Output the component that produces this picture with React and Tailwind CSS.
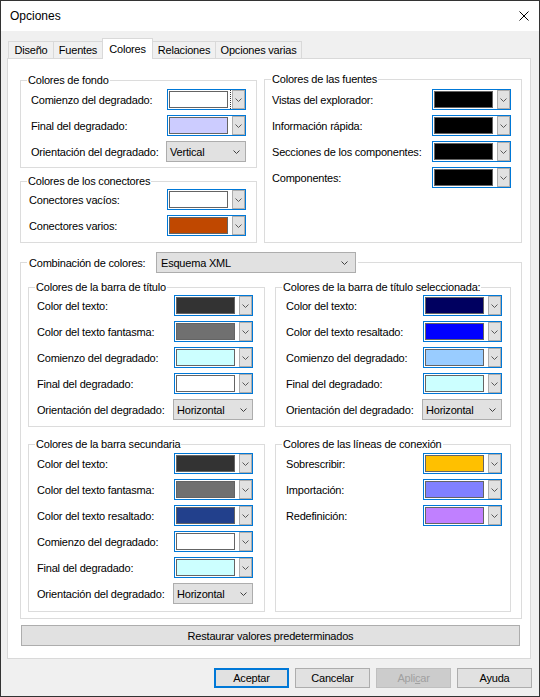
import clsx from 'clsx'

const FONDO = [
  { label: 'Comienzo del degradado:', color: 'bg-white', focused: true },
  { label: 'Final del degradado:', color: 'bg-[#ccccff]' },
]

const CONECTORES = [
  { label: 'Conectores vacíos:', color: 'bg-white' },
  { label: 'Conectores varios:', color: 'bg-[#c04800]' },
]

const FUENTES = [
  { label: 'Vistas del explorador:', color: 'bg-black' },
  { label: 'Información rápida:', color: 'bg-black' },
  { label: 'Secciones de los componentes:', color: 'bg-black' },
  { label: 'Componentes:', color: 'bg-black' },
]

const TITULO = [
  { label: 'Color del texto:', color: 'bg-[#333333]' },
  { label: 'Color del texto fantasma:', color: 'bg-[#707070]' },
  { label: 'Comienzo del degradado:', color: 'bg-[#ccffff]' },
  { label: 'Final del degradado:', color: 'bg-white' },
]

const SELECCIONADA = [
  { label: 'Color del texto:', color: 'bg-[#000060]' },
  { label: 'Color del texto resaltado:', color: 'bg-[#0000ff]' },
  { label: 'Comienzo del degradado:', color: 'bg-[#99ccff]' },
  { label: 'Final del degradado:', color: 'bg-[#ccffff]' },
]

const SECUNDARIA = [
  { label: 'Color del texto:', color: 'bg-[#333333]' },
  { label: 'Color del texto fantasma:', color: 'bg-[#707070]' },
  { label: 'Color del texto resaltado:', color: 'bg-[#22408c]' },
  { label: 'Comienzo del degradado:', color: 'bg-white' },
  { label: 'Final del degradado:', color: 'bg-[#ccffff]' },
]

const LINEAS = [
  { label: 'Sobrescribir:', color: 'bg-[#ffc000]' },
  { label: 'Importación:', color: 'bg-[#8080ff]' },
  { label: 'Redefinición:', color: 'bg-[#c080ff]' },
]

const TABS = [
  { label: 'Diseño', w: 'w-[45px]' },
  { label: 'Fuentes', w: 'w-[49px]' },
  { label: 'Colores', w: 'w-[51px]', active: true },
  { label: 'Relaciones', w: 'w-[62px]', noLeft: true },
  { label: 'Opciones varias', w: 'w-[87px]', last: true },
]

function Chevron({ className = 'text-[#5a5a5a]' }) {
  return (
    <svg width="7" height="4" viewBox="0 0 7 4" className={className}>
      <polyline points="0.5,0.5 3.5,3.5 6.5,0.5" fill="none" stroke="currentColor" strokeWidth="1" />
    </svg>
  )
}

function ColorPicker({ color, focused }) {
  return (
    <div className="flex h-[21px] w-[79px] shrink-0 items-center justify-between border border-[#0078d7] bg-white pl-px">
      <div className={clsx('flex h-[19px] items-center pr-[2px]', focused && 'border-r border-dotted border-[#333]')}>
        <div className={clsx('h-[17px] w-[59px] border border-[#646464]', color)} />
      </div>
      <div className="flex h-[19px] w-[13px] items-center justify-center border border-[#adadad] bg-[#e1e1e1]">
        <Chevron />
      </div>
    </div>
  )
}

function Select({ value, className = 'w-[80px]' }) {
  return (
    <div className={clsx('flex h-[21px] shrink-0 items-center justify-between border border-[#adadad] bg-[#e1e1e1] pl-[3px] pr-[5px]', className)}>
      <span>{value}</span>
      <Chevron className="text-[#404040]" />
    </div>
  )
}

function Row({ label, children }) {
  return (
    <div className="flex items-center justify-between">
      <span>{label}</span>
      {children}
    </div>
  )
}

function Group({ title, className, bodyClass, children }) {
  return (
    <fieldset className={clsx('min-w-0 border border-[#dcdcdc]', className)}>
      <legend className="ml-[6px] px-px leading-[14px]">{title}</legend>
      <div className={clsx('flex flex-col gap-[5px]', bodyClass)}>{children}</div>
    </fieldset>
  )
}

function Pickers({ items }) {
  return items.map((it) => (
    <Row key={it.label} label={it.label}>
      <ColorPicker color={it.color} focused={it.focused} />
    </Row>
  ))
}

function Button({ children, primary, disabled }) {
  return (
    <div
      className={clsx(
        'flex h-[20px] w-[75px] items-center justify-center',
        primary && 'border-2 border-[#0078d7] bg-[#e1e1e1]',
        disabled && 'border border-[#bfbfbf] bg-[#cccccc] text-[#a0a0a0]',
        !primary && !disabled && 'border border-[#adadad] bg-[#e1e1e1]'
      )}
    >
      {children}
    </div>
  )
}

export default function App() {
  return (
    <div className="flex h-[697px] w-[540px] flex-col border border-[#333] bg-[#f0f0f0] font-['Liberation_Sans',Arial,sans-serif] text-[11px] leading-[14px] tracking-[-0.2px] text-black">
      {/* title bar */}
      <div className="flex h-[30px] shrink-0 items-center justify-between bg-white pl-[9px] pr-[10px]">
        <span className="text-[12px] tracking-normal">Opciones</span>
        <svg width="10" height="10" viewBox="0 0 10 10">
          <path d="M0.5 0.5L9.5 9.5M9.5 0.5L0.5 9.5" stroke="#000" strokeWidth="1" />
        </svg>
      </div>

      <div className="flex flex-1 flex-col pl-[6px] pr-[8px] pt-[7px]">
        {/* tabs */}
        <div className="flex h-[20px] items-end pl-px">
          {TABS.map((t) => (
            <div
              key={t.label}
              className={clsx(
                'flex items-center justify-center border-t border-[#d9d9d9]',
                t.w,
                !t.noLeft && 'border-l',
                (t.active || t.last) && 'border-r',
                t.active ? 'relative z-10 -mb-px h-[21px] bg-white' : 'h-[17px] bg-[#f0f0f0]'
              )}
            >
              {t.label}
            </div>
          ))}
        </div>

        {/* panel */}
        <div className="flex flex-col border border-[#d9d9d9] bg-white pb-[12px] pl-[12px] pr-[8px] pt-[14px]">
          <div className="grid grid-cols-[237px_1fr] gap-x-[7px]">
            <div className="flex flex-col gap-[6px]">
              <Group title="Colores de fondo" bodyClass="pl-[10px] pr-[10px] pt-[2px] pb-[5px]">
                <Pickers items={FONDO} />
                <Row label="Orientación del degradado:">
                  <Select value="Vertical" />
                </Row>
              </Group>
              <Group title="Colores de los conectores" bodyClass="pl-[8px] pr-[10px] pt-px pb-[6px]">
                <Pickers items={CONECTORES} />
              </Group>
            </div>
            <Group title="Colores de las fuentes" className="-mt-px" bodyClass="pl-[7px] pr-[10px] pt-[3px]">
              <Pickers items={FUENTES} />
            </Group>
          </div>

          <fieldset className="mt-[9px] min-w-0 border border-[#dcdcdc]">
            <legend className="ml-[6px] flex items-center px-[2px]">
              <span className="w-[127px] pl-0">Combinación de colores:</span>
              <Select value="Esquema XML" className="w-[200px] pl-[4px] pr-[7px]" />
            </legend>
            <div className="grid grid-cols-[237px_236px] gap-x-[10px] gap-y-[10px] pb-[6px] pl-[7px] pr-[10px] pt-[7px]">
              <Group title="Colores de la barra de título" bodyClass="pl-[8px] pr-[11px] pt-px pb-[6px]">
                <Pickers items={TITULO} />
                <Row label="Orientación del degradado:">
                  <Select value="Horizontal" />
                </Row>
              </Group>
              <Group title="Colores de la barra de título seleccionada:" bodyClass="pl-[10px] pr-[8px] pt-px pb-[6px]">
                <Pickers items={SELECCIONADA} />
                <Row label="Orientación del degradado:">
                  <Select value="Horizontal" />
                </Row>
              </Group>
              <Group title="Colores de la barra secundaria" bodyClass="pl-[8px] pr-[11px] pt-[2px] pb-[7px]">
                <Pickers items={SECUNDARIA} />
                <Row label="Orientación del degradado:">
                  <Select value="Horizontal" />
                </Row>
              </Group>
              <Group title="Colores de las líneas de conexión" bodyClass="pl-[10px] pr-[8px] pt-[2px]">
                <Pickers items={LINEAS} />
              </Group>
            </div>
          </fieldset>

          <div className="ml-px mr-[2px] mt-[6px] flex h-[21px] items-center justify-center border border-[#adadad] bg-[#e1e1e1]">
            Restaurar valores predeterminados
          </div>
        </div>

        {/* dialog buttons */}
        <div className="-mr-px mt-[9px] flex justify-end gap-[6px]">
          <Button primary>Aceptar</Button>
          <Button>Cancelar</Button>
          <Button disabled>
            Apli<u>c</u>ar
          </Button>
          <Button>Ayuda</Button>
        </div>
      </div>
    </div>
  )
}
